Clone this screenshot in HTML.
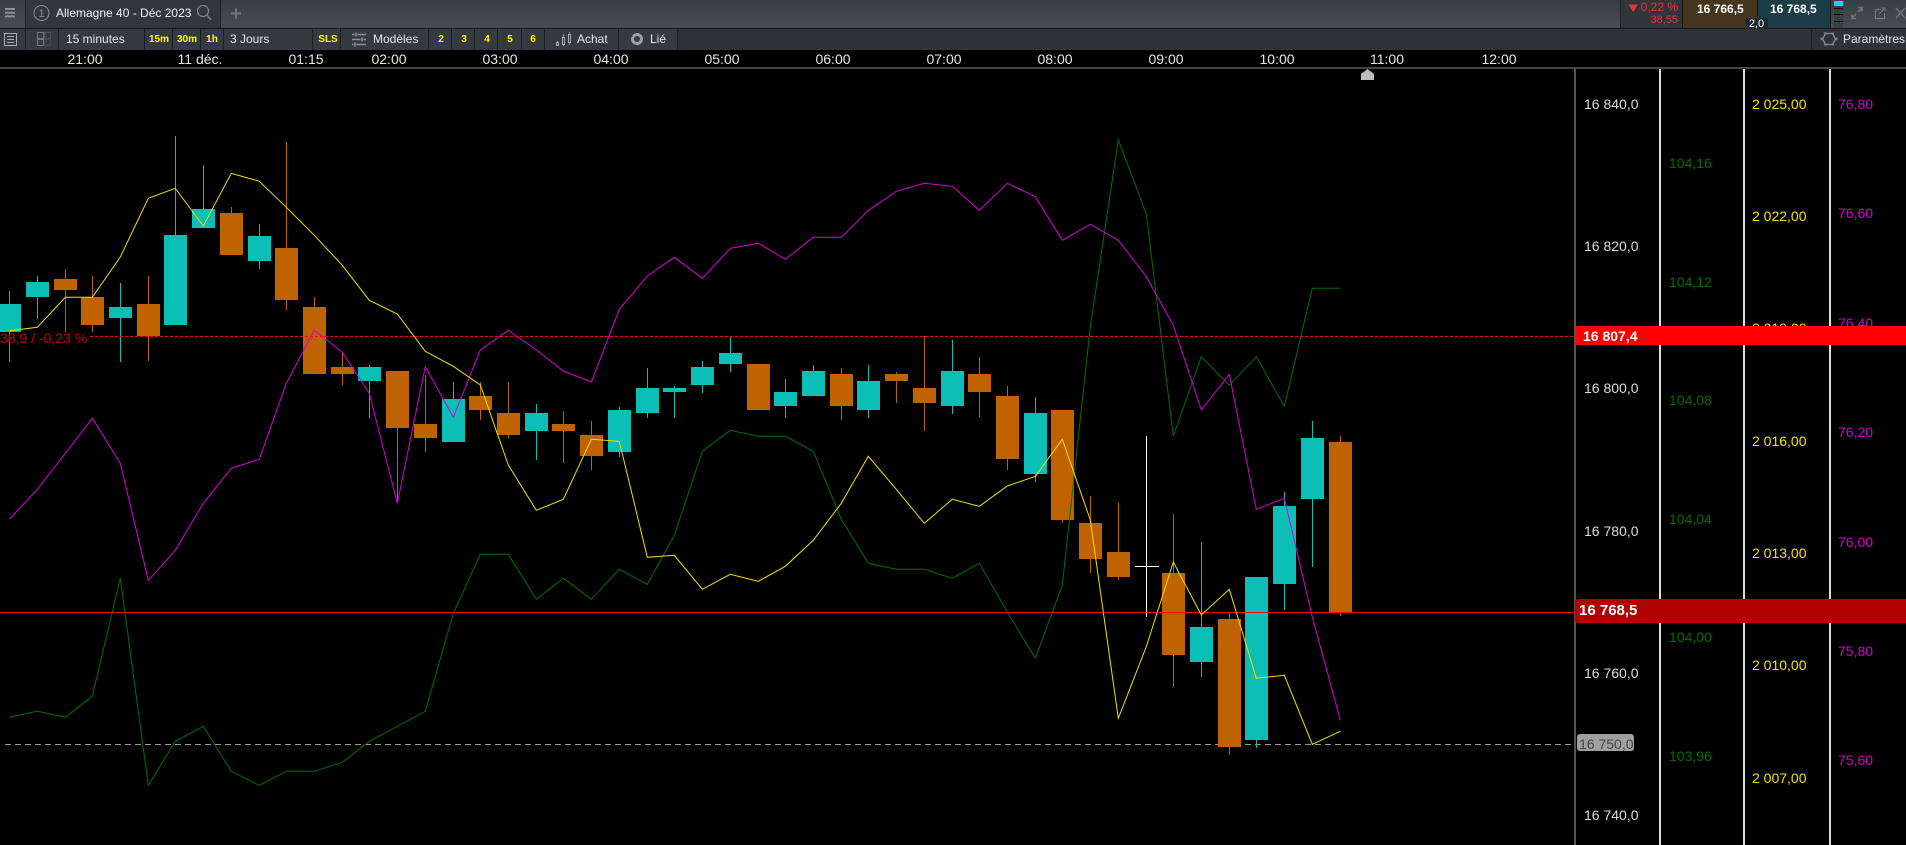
<!DOCTYPE html>
<html lang="fr">
<head>
<meta charset="utf-8">
<title>Allemagne 40 - Déc 2023</title>
<style>
html,body{margin:0;padding:0;width:1906px;height:845px;overflow:hidden;background:#000;font-family:"Liberation Sans",Arial,sans-serif}
#root{position:relative;width:1906px;height:845px;overflow:hidden;background:#000}
.a{position:absolute}
.t{position:absolute;white-space:nowrap;line-height:16px;font-size:14px}
.c{transform:translateX(-50%)}
.r1{font-size:12px;color:#e4e6e8}
.y{font-size:10px;font-weight:bold;color:#ff0}
.cell{position:absolute;top:29px;height:21px;background:#353a40;border-right:1px solid #1c1f22;box-sizing:border-box}
.tick{color:#e6e6e6;top:51px}
.p{color:#dcdcdc;left:1584px}
.g{color:#006f00;left:1669px}
.l{color:#f5e400;left:1752px}
.m{color:#d000d0;left:1838px}
svg{position:absolute;left:0;top:0}
</style>
</head>
<body>
<div id="root">

<!-- top bar -->
<div class="a" style="left:0;top:0;width:1906px;height:28px;background:linear-gradient(#393e45,#464c54)"></div>
<div class="a" style="left:0;top:28px;width:1906px;height:1px;background:#15171a"></div>
<div class="a" style="left:25px;top:0;width:196px;height:28px;background:#33373d;border-left:1px solid #1f2226;border-right:1px solid #1f2226;box-sizing:border-box"></div>
<div class="a" style="left:0;top:29px;width:1906px;height:21px;background:#2f3337"></div>

<!-- right quote panels -->
<div class="a" style="left:1620px;top:0;width:62px;height:28px;background:#31353a;border-left:1px solid #1f2226;box-sizing:border-box"></div>
<div class="a" style="left:1682px;top:0;width:75px;height:28px;background:#46351f;border-left:1px solid #111;box-sizing:border-box"></div>
<div class="a" style="left:1757px;top:0;width:73px;height:28px;background:#1c3c46;border-left:1px solid #111;box-sizing:border-box"></div>
<div class="a" style="left:1830px;top:0;width:1px;height:28px;background:#15171a"></div>
<div class="a" style="left:1834px;top:1px;width:9px;height:5px;background:#00d8f0"></div>
<div class="a" style="left:1834px;top:6px;width:9px;height:22px;background:#3a3f45"></div>
<div class="a" style="left:1834px;top:8px;width:9px;height:1px;background:#000"></div>
<div class="a" style="left:1834px;top:14px;width:9px;height:1px;background:#000"></div>
<div class="a" style="left:1834px;top:21px;width:9px;height:1px;background:#000"></div>

<div class="t" style="left:56px;top:5px;font-size:12px;color:#f0f2f4">Allemagne 40 - Déc 2023</div>
<div class="t" style="left:1640px;top:-1px;font-size:12px;width:38px;text-align:right;color:#e8343c">0,22 %</div>
<div class="t" style="left:1629px;top:12px;font-size:11px;width:49px;text-align:right;color:#e8343c">38,55</div>
<div class="t" style="left:1697px;top:1px;font-size:12px;font-weight:bold;color:#fff">16 766,5</div>
<div class="t" style="left:1770px;top:1px;font-size:12px;font-weight:bold;color:#fff">16 768,5</div>
<div class="a" style="left:1745px;top:18px;width:23px;height:11px;background:#1e2732;border-radius:2px 2px 0 0"></div>
<div class="t" style="left:1745px;top:16px;width:23px;text-align:center;font-size:11px;color:#fff">2,0</div>

<!-- toolbar cells -->
<div class="cell" style="left:0;width:26px"></div>
<div class="cell" style="left:26px;width:33px"></div>
<div class="cell" style="left:59px;width:86px"></div>
<div class="cell" style="left:145px;width:28px"></div>
<div class="cell" style="left:173px;width:28px"></div>
<div class="cell" style="left:201px;width:23px"></div>
<div class="cell" style="left:224px;width:89px"></div>
<div class="cell" style="left:313px;width:28px"></div>
<div class="cell" style="left:341px;width:88px"></div>
<div class="cell" style="left:429px;width:23px"></div>
<div class="cell" style="left:452px;width:23px"></div>
<div class="cell" style="left:475px;width:23px"></div>
<div class="cell" style="left:498px;width:24px"></div>
<div class="cell" style="left:522px;width:23px"></div>
<div class="cell" style="left:545px;width:74px"></div>
<div class="cell" style="left:619px;width:59px"></div>
<div class="a" style="left:1811px;top:29px;width:1px;height:21px;background:#1c1f22"></div>

<div class="t r1" style="left:66px;top:31px">15 minutes</div>
<div class="t y c" style="left:159px;top:32px">15m</div>
<div class="t y c" style="left:187px;top:32px">30m</div>
<div class="t y c" style="left:212px;top:32px">1h</div>
<div class="t r1" style="left:230px;top:31px">3 Jours</div>
<div class="t y c" style="left:328px;top:32px">SLS</div>
<div class="t r1" style="left:373px;top:31px">Modèles</div>
<div class="t y c" style="left:441px;top:32px">2</div>
<div class="t y c" style="left:464px;top:32px">3</div>
<div class="t y c" style="left:487px;top:32px">4</div>
<div class="t y c" style="left:510px;top:32px">5</div>
<div class="t y c" style="left:533px;top:32px">6</div>
<div class="t r1" style="left:577px;top:31px">Achat</div>
<div class="t r1" style="left:650px;top:31px">Lié</div>
<div class="t r1" style="left:1843px;top:31px">Paramètres</div>

<!-- time axis -->
<div class="t tick c" style="left:85px">21:00</div>
<div class="t tick c" style="left:200px">11 déc.</div>
<div class="t tick c" style="left:306px">01:15</div>
<div class="t tick c" style="left:389px">02:00</div>
<div class="t tick c" style="left:500px">03:00</div>
<div class="t tick c" style="left:611px">04:00</div>
<div class="t tick c" style="left:722px">05:00</div>
<div class="t tick c" style="left:833px">06:00</div>
<div class="t tick c" style="left:944px">07:00</div>
<div class="t tick c" style="left:1055px">08:00</div>
<div class="t tick c" style="left:1166px">09:00</div>
<div class="t tick c" style="left:1277px">10:00</div>
<div class="t tick c" style="left:1387px">11:00</div>
<div class="t tick c" style="left:1499px">12:00</div>

<svg width="1906" height="845" viewBox="0 0 1906 845" fill="none">
  <!-- header separator and axes -->
  <g shape-rendering="crispEdges">
    <rect x="0" y="67" width="1906" height="2" fill="#444"/>
    <rect x="1574" y="69" width="2" height="776" fill="#555"/>
    <rect x="1659" y="69" width="2" height="776" fill="#ddd"/>
    <rect x="1743" y="69" width="2" height="776" fill="#ddd"/>
    <rect x="1829" y="69" width="2" height="776" fill="#ddd"/>
    <path d="M5 744.5H1574" stroke="#9a9a9a" stroke-dasharray="6 4"/>
    <!-- teal wicks -->
    <path stroke="#0bbfb7" d="M9.5 291V362M37.5 276V319M120.5 283V362M175.5 136V325M203.5 165V228M259.5 224V269M369.5 365V418M453.5 382V442M536.5 404V460M619.5 407V457M647.5 368V418M674.5 386V418M702.5 361V393M730.5 337V372M785.5 379V418M813.5 365V396M868.5 365V418M952.5 340V414M1035.5 397V482M1201.5 542V677M1256.5 577V748M1284.5 492V610M1312.5 421V567"/>
    <!-- orange wicks -->
    <path stroke="#c16200" d="M65.5 269V332M92.5 276V332M148.5 276V361M231.5 207V255M286.5 142V310M314.5 297V374M342.5 353V385M397.5 371V503M425.5 375V452M480.5 382V420M508.5 382V438M563.5 411V463M591.5 421V470M841.5 368V420M896.5 372V403M924.5 336V431M979.5 357V417M1007.5 386V470M1062.5 410V523M1090.5 496V573M1118.5 503V580M1173.5 514V687M1229.5 612V755M1340.5 436V616"/>
    <!-- teal bodies -->
    <path stroke="#0bbfb7" stroke-width="23" d="M9.5 304V332M37.5 282V297M120.5 307V318M175.5 235V325M203.5 209V228M259.5 236V261M369.5 367V381M453.5 399V442M536.5 413V431M619.5 410V452M647.5 388V413M674.5 388V392M702.5 367V385M730.5 353V364M785.5 392V406M813.5 371V396M868.5 381V410M952.5 371V406M1035.5 413V474M1201.5 627V662M1256.5 577V740M1284.5 506V584M1312.5 438V499"/>
    <!-- orange bodies -->
    <path stroke="#c16200" stroke-width="23" d="M65.5 279V290M92.5 297V325M148.5 304V336M231.5 213V255M286.5 248V300M314.5 307V374M342.5 367V374M397.5 371V428M425.5 424V438M480.5 396V410M508.5 413V435M563.5 424V431M591.5 435V456M758.5 364V410M841.5 374V406M896.5 374V381M924.5 388V403M979.5 374V392M1007.5 396V459M1062.5 410V520M1090.5 523V559M1118.5 552V577M1173.5 573V655M1229.5 619V747M1340.5 442V612"/>
    <!-- white doji -->
    <path stroke="#fff" d="M1146.5 436V617M1135 566.5H1159"/>
    <!-- price lines -->
    <path stroke="#f00" d="M0 612.5H1575"/>
    <path stroke="#f00" stroke-dasharray="3 2" d="M90 336.5H1574"/>
  </g>

  <!-- green -->
  <polyline stroke="#007000" stroke-width="1" points="9.3,717.3 37.3,711.3 65.3,717.3 92.3,696.3 120.3,578.3 148.3,785.3 175.3,741.3 203.3,726.3 231.3,771.3 259.3,785.3 286.3,771.3 314.3,771.3 342.3,762.3 369.3,741.3 397.3,726.3 425.3,711.3 453.3,613.3 480.3,554.3 508.3,554.3 536.3,599.3 563.3,578.3 591.3,599.3 619.3,569.3 647.3,584.3 674.3,535.3 702.3,451.3 730.3,430.3 758.3,436.3 785.3,436.3 813.3,451.3 841.3,519.3 868.3,563.3 896.3,569.3 924.3,569.3 952.3,578.3 979.3,563.3 1007.3,612 1035.3,658.3 1062.3,585 1090.3,326.7 1118.3,140 1146.3,214 1173.3,436 1201.3,356.7 1229.3,385.3 1256.3,356.7 1284.3,406.3 1312.3,288.3 1340.3,288.3"/>
  <!-- magenta -->
  <polyline stroke="#d800d8" stroke-width="1" points="9.3,519.3 37.3,489.3 65.3,453.3 92.3,418.3 120.3,463.3 148.3,580.3 175.3,550.3 203.3,503.3 231.3,468.3 259.3,459.3 286.3,383.3 314.3,330.3 342.3,352.3 369.3,393.3 397.3,503.3 425.3,366.7 453.3,417.3 480.3,350 508.3,330.3 536.3,350 563.3,371 591.3,382 619.3,309.3 647.3,276 674.3,257.3 702.3,278.3 730.3,248.3 758.3,243.3 785.3,259.3 813.3,237.3 841.3,237.3 868.3,210.3 896.3,191.3 924.3,183.3 952.3,186.3 979.3,210.3 1007.3,183.3 1035.3,196.7 1062.3,240.3 1090.3,224.3 1118.3,240.3 1146.3,276.7 1173.3,325.3 1201.3,410 1229.3,374.3 1256.3,509.3 1284.3,498.3 1312.3,616.7 1340.3,720.3"/>
  <!-- yellow -->
  <polyline stroke="#f0e000" stroke-width="1" points="9.3,330.7 37.3,327.3 65.3,297.3 92.3,297.3 120.3,257 148.3,198.3 175.3,188.3 203.3,226 231.3,173.3 259.3,181.3 286.3,207.3 314.3,235.3 342.3,265.3 369.3,300.3 397.3,314 425.3,351.3 453.3,366.3 480.3,385 508.3,465 536.3,510.3 563.3,499.3 591.3,439.3 619.3,441.3 647.3,557.3 674.3,555.3 702.3,589.3 730.3,574.3 758.3,581.3 785.3,566.3 813.3,540.3 841.3,503.3 868.3,456.3 896.3,489.3 924.3,523.3 952.3,499.3 979.3,506.3 1007.3,486 1035.3,476.3 1062.3,439.3 1090.3,520 1118.3,718.3 1146.3,646.7 1173.3,562 1201.3,615 1229.3,589.3 1256.3,678.3 1284.3,675.3 1312.3,744.3 1340.3,731.3"/>

  <!-- pointer on time axis -->
  <path d="M1361 80V74L1367.5 69L1374 74V80Z" fill="#bdbdbd"/>

  <!-- down triangle -->
  <path d="M1628.5 4.5H1638L1633.2 12Z" fill="#e8343c"/>

  <!-- hamburger -->
  <path d="M5 9H15M5 12.7H15M5 16.4H15" stroke="#8c9196" stroke-width="2"/>
  <!-- numbered circle -->
  <circle cx="41.5" cy="13" r="7.5" stroke="#8c9196" stroke-width="1"/>
  <text x="41.5" y="17" font-size="11" text-anchor="middle" fill="#8c9196" font-family="Liberation Sans, sans-serif">1</text>
  <!-- search -->
  <circle cx="203" cy="11" r="5.5" stroke="#7f8489" stroke-width="1.2"/>
  <path d="M207 15L211 20" stroke="#7f8489" stroke-width="1.5"/>
  <!-- plus -->
  <path d="M231 13.5H241M236 8.5V18.5" stroke="#6f757c" stroke-width="2"/>
  <!-- list icon -->
  <rect x="4.5" y="33.5" width="12" height="12" stroke="#a8adb2" fill="none"/>
  <path d="M7 36.5H14M7 39.5H14M7 42.5H14" stroke="#a8adb2"/>
  <!-- grid icon -->
  <rect x="37.5" y="32.5" width="6" height="6" stroke="#70757a"/>
  <rect x="44.5" y="32.5" width="6" height="6" stroke="#4e5358"/>
  <rect x="37.5" y="39.5" width="6" height="6" stroke="#70757a"/>
  <rect x="44.5" y="39.5" width="6" height="6" stroke="#4e5358" stroke-dasharray="1 1"/>
  <!-- sliders -->
  <path d="M352 34.5H366M352 39.5H366M352 44.5H366" stroke="#8c9196" stroke-width="1.5"/>
  <path d="M356 32V37M362 37V42M355 42V47" stroke="#353a40" stroke-width="3"/>
  <path d="M356 32.5V36.5M362 37.5V41.5M355 42.5V46.5" stroke="#8c9196" stroke-width="1.5"/>
  <!-- candles icon -->
  <path d="M557.5 41V46M563.5 34V46M569.5 32V45" stroke="#8c9196"/>
  <rect x="556.5" y="42.5" width="2" height="3" fill="#353a40" stroke="#a8adb2"/>
  <rect x="562.5" y="37.5" width="2" height="7" fill="#353a40" stroke="#a8adb2"/>
  <rect x="568.5" y="34.5" width="2" height="8" fill="#353a40" stroke="#a8adb2"/>
  <!-- link icon -->
  <circle cx="637" cy="39" r="4.5" stroke="#9aa0a5" stroke-width="3"/>
  <path d="M633 36L629 33V39Z" fill="#353a40"/>
  <!-- gear -->
  <path d="M1825.5 33.5H1832.5L1835.5 39L1832.5 44.5H1825.5L1822.5 39Z" stroke="#7f8489" stroke-width="1.5"/>
  <path d="M1825 32.5V33.5M1833 32.5V33.5M1825 44.5V45.5M1833 44.5V45.5M1822 39H1820.5M1836 39H1837.5" stroke="#7f8489" stroke-width="2.4"/>
  <!-- window icons -->
  <path d="M1852 18L1856 14M1852 14.5V18.5H1856M1862 8L1858 12M1862 11.5V7.5H1858" stroke="#6f757c" stroke-width="1.4" fill="none"/>
  <path d="M1881 9.5H1875.5V18.5H1884.5V13M1879 14L1885 8M1881.5 8H1885V11.5" stroke="#6f757c" stroke-width="1.2" fill="none"/>
  <path d="M1896 8L1905 18M1905 8L1896 18" stroke="#6f757c" stroke-width="1.4"/>
</svg>

<!-- variation label -->
<div class="t" style="left:0;top:330px;color:#c80000">38,9 / -0,23 %</div>

<!-- price axis -->
<div class="t p" style="top:96px">16 840,0</div>
<div class="t p" style="top:238px">16 820,0</div>
<div class="t p" style="top:380px">16 800,0</div>
<div class="t p" style="top:523px">16 780,0</div>
<div class="t p" style="top:665px">16 760,0</div>
<div class="t p" style="top:807px">16 740,0</div>

<div class="t g" style="top:155px">104,16</div>
<div class="t g" style="top:274px">104,12</div>
<div class="t g" style="top:392px">104,08</div>
<div class="t g" style="top:511px">104,04</div>
<div class="t g" style="top:629px">104,00</div>
<div class="t g" style="top:748px">103,96</div>

<div class="t l" style="top:96px">2 025,00</div>
<div class="t l" style="top:208px">2 022,00</div>
<div class="t l" style="top:320px">2 019,00</div>
<div class="t l" style="top:433px">2 016,00</div>
<div class="t l" style="top:545px">2 013,00</div>
<div class="t l" style="top:657px">2 010,00</div>
<div class="t l" style="top:770px">2 007,00</div>

<div class="t m" style="top:96px">76,80</div>
<div class="t m" style="top:205px">76,60</div>
<div class="t m" style="top:315px">76,40</div>
<div class="t m" style="top:424px">76,20</div>
<div class="t m" style="top:534px">76,00</div>
<div class="t m" style="top:643px">75,80</div>
<div class="t m" style="top:752px">75,60</div>

<!-- price bands -->
<div class="a" style="left:1576px;top:326px;width:330px;height:19px;background:#f00"></div>
<div class="t" style="left:1583px;top:328px;font-weight:bold;color:#fff">16 807,4</div>
<div class="a" style="left:1575px;top:599px;width:331px;height:24px;background:#b00000;border-radius:3px 0 0 3px"></div>
<div class="t" style="left:1579px;top:603px;font-size:15px;font-weight:bold;color:#fff">16 768,5</div>
<div class="a" style="left:1577px;top:734px;width:57px;height:17px;background:#a0a0a0;border-radius:3px"></div>
<div class="t" style="left:1579px;top:736px;color:#444">16 750,0</div>

</div>
</body>
</html>
